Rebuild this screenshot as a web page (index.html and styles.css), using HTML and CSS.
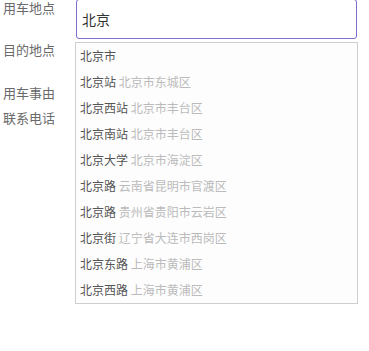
FILE: index.html
```html
<!DOCTYPE html>
<html lang="zh-CN">
<head>
<meta charset="utf-8">
<link rel="stylesheet" href="styles.css">
</head>
<body>
<div class="form">
  <div class="row row-1">
    <div class="label">用车地点</div>
    <div class="field">
      <div class="input">北京</div>
      <ul class="dropdown">
        <li><span class="main">北京市</span></li>
        <li><span class="main">北京站</span> <span class="sub">北京市东城区</span></li>
        <li><span class="main">北京西站</span> <span class="sub">北京市丰台区</span></li>
        <li><span class="main">北京南站</span> <span class="sub">北京市丰台区</span></li>
        <li><span class="main">北京大学</span> <span class="sub">北京市海淀区</span></li>
        <li><span class="main">北京路</span> <span class="sub">云南省昆明市官渡区</span></li>
        <li><span class="main">北京路</span> <span class="sub">贵州省贵阳市云岩区</span></li>
        <li><span class="main">北京街</span> <span class="sub">辽宁省大连市西岗区</span></li>
        <li><span class="main">北京东路</span> <span class="sub">上海市黄浦区</span></li>
        <li><span class="main">北京西路</span> <span class="sub">上海市黄浦区</span></li>
      </ul>
    </div>
  </div>
  <div class="row row-2"><div class="label">目的地点</div></div>
  <div class="row row-3"><div class="label">用车事由</div></div>
  <div class="row row-4"><div class="label">联系电话</div></div>
</div>
</body>
</html>
```
FILE: styles.css
```css
html, body {
  margin: 0;
  padding: 0;
  background: #fff;
}
body {
  font-family: "Noto Sans CJK SC", "Noto Sans", sans-serif;
  min-height: 351px;
}
.form {
  display: flex;
  flex-direction: column;
  min-height: 351px;
}
.row {
  display: flex;
  align-items: flex-start;
}
.label {
  width: 72px;
  padding-left: 3px;
  font-size: 13px;
  line-height: 16px;
  color: #6a6a6a;
  flex: none;
}
.row-1 { height: 42px; }
.row-2 { height: 43px; }
.row-3 { height: 25px; }
.row-4 { height: 25px; }
.field {
  position: relative;
  width: 283px;
}
.input {
  box-sizing: border-box;
  margin-top: -1px;
  height: 40px;
  margin-left: 1px;
  width: 281px;
  border: 1px solid #7a6fcf;
  border-radius: 3px;
  padding-left: 5px;
  font-size: 14px;
  line-height: 38px;
  color: #333;
}
.dropdown {
  position: absolute;
  top: 42px;
  left: 0;
  box-sizing: border-box;
  width: 283px;
  margin: 0;
  padding: 0;
  list-style: none;
  border: 1px solid #cfcfcf;
  background: #fdfdfd;
  z-index: 2;
}
.dropdown li {
  height: 26px;
  line-height: 26px;
  padding-left: 4px;
  font-size: 12px;
  white-space: nowrap;
}
.main { color: #555; }
.sub { color: #bbb; }
```
